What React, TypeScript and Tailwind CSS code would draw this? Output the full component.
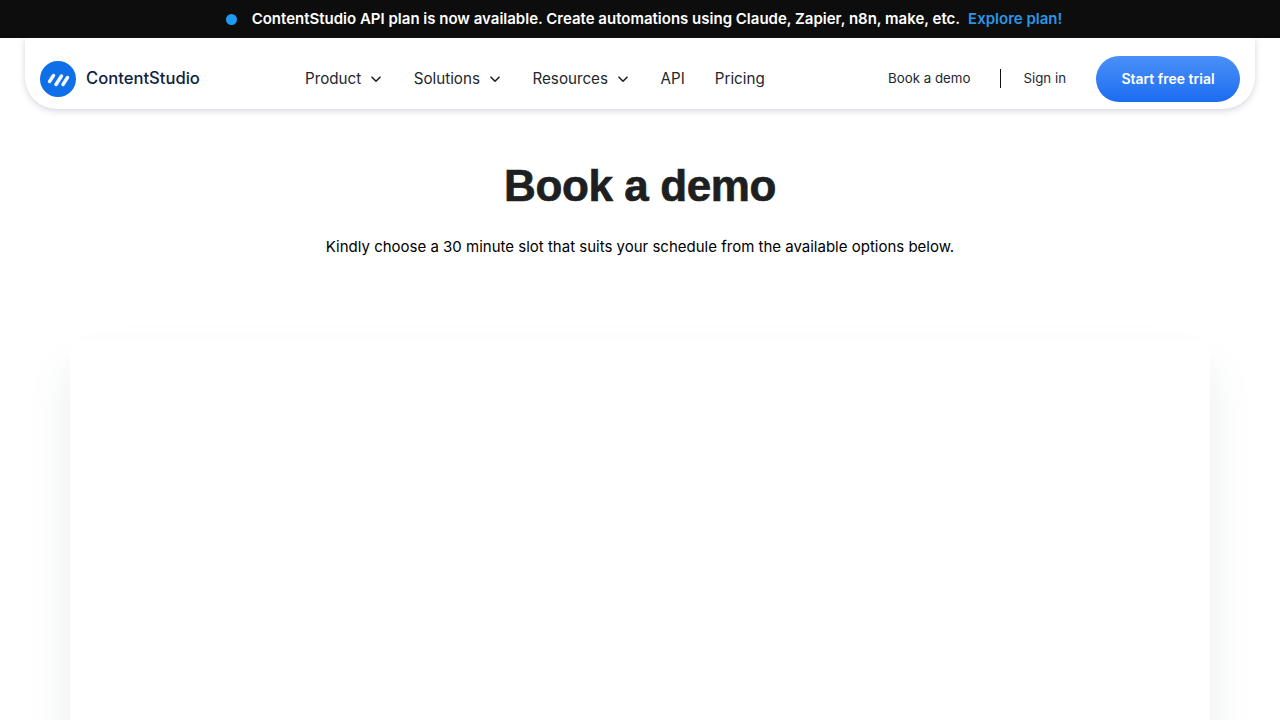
import React from "react";

function Chevron() {
  return (
    <svg width="10" height="7" viewBox="0 0 10 7" fill="none" className="ml-[10px] mr-[2.5px] mt-[2px]">
      <path d="M1 1.2 5 5.2l4-4" stroke="#1f2328" strokeWidth="1.6" strokeLinecap="round" strokeLinejoin="round" />
    </svg>
  );
}

function Logo() {
  return (
    <svg width="36" height="36" viewBox="0 0 36 36">
      <circle cx="18" cy="18" r="18" fill="#0f6fe8" />
      <g stroke="#eef6ff" strokeLinecap="round" fill="none" strokeWidth="3.5">
        <path d="M9.5 20.5 13.5 14.5" />
        <path d="M16 23.5 21.5 15" />
        <path d="M23 23.5 27.5 16.5" />
      </g>
    </svg>
  );
}

function NavItem({ label, chevron }: { label: string; chevron?: boolean }) {
  return (
    <a className="flex items-center text-[15.2px] leading-[20px] text-[#24272b]">
      {label}
      {chevron ? <Chevron /> : null}
    </a>
  );
}

export default function App() {
  return (
    <div className="h-[720px] overflow-hidden bg-white font-['Inter',sans-serif]">
      <div className="flex h-[38px] items-center justify-center bg-[#0d0d0d] pl-[8px] text-[15px] font-semibold text-white">
        <span className="mr-[15px] h-[11px] w-[11px] rounded-full bg-[#1d9bf0]" />
        <span>ContentStudio API plan is now available. Create automations using Claude, Zapier, n8n, make, etc.</span>
        <a className="ml-[8px] text-[#2a96e6]">Explore plan!</a>
      </div>

      <div className="mx-[25px] flex h-[71px] items-center rounded-b-[32px] bg-white pl-[15px] pr-[15px] pt-[10px] shadow-[0_2px_6px_rgba(60,70,110,0.22)]">
        <div className="flex w-[265px] shrink-0 items-center">
          <Logo />
          <span className="ml-[10px] text-[16.6px] font-medium text-[#0d2240]">ContentStudio</span>
        </div>
        <nav className="flex items-center gap-[30px]">
          <NavItem label="Product" chevron />
          <NavItem label="Solutions" chevron />
          <NavItem label="Resources" chevron />
          <NavItem label="API" />
          <NavItem label="Pricing" />
        </nav>
        <div className="ml-auto flex items-center">
          <a className="text-[13.3px] text-[#24272b]">Book a demo</a>
          <span className="ml-[30px] mr-[22px] h-[19px] w-px bg-[#111111]" />
          <a className="text-[13.3px] text-[#24272b]">Sign in</a>
          <a className="ml-[30px] flex h-[46px] w-[144px] items-center justify-center rounded-full bg-gradient-to-b from-[#4a90f8] to-[#1a6cf0] text-[14px] font-semibold text-white">
            Start free trial
          </a>
        </div>
      </div>

      <main className="flex flex-col items-center">
        <h1 className="mt-[49px] font-['Liberation_Sans',sans-serif] text-[44px] font-bold leading-[56px] tracking-[-0.4px] text-[#1e1f21] [-webkit-text-stroke:0.7px_#1e1f21]">Book a demo</h1>
        <p className="mt-[21px] text-[15px] leading-[24px] text-[#000000]">
          Kindly choose a 30 minute slot that suits your schedule from the available options below.
        </p>
        <div className="mt-[81px] h-[500px] w-[1140px] bg-white shadow-[0_30px_40px_rgba(80,115,135,0.11),0_0_70px_rgba(0,0,0,0.012)]" />
      </main>
    </div>
  );
}
